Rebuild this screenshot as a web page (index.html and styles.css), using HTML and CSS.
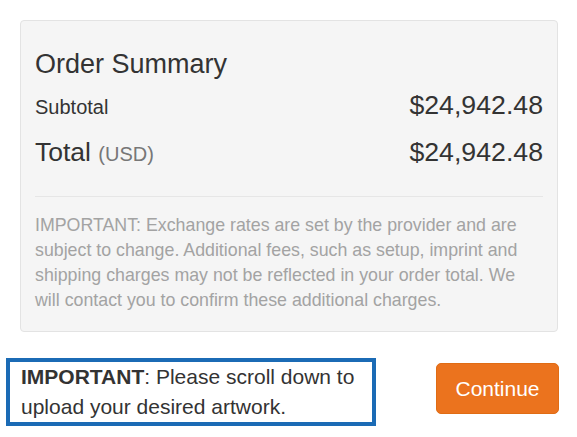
FILE: index.html
```html
<!DOCTYPE html>
<html>
<head>
<meta charset="utf-8">
<link rel="stylesheet" href="styles.css">
</head>
<body>
<div class="page">
  <section class="summary">
    <h3 class="summary-title">Order Summary</h3>
    <div class="row row-sub">
      <span class="label">Subtotal</span>
      <span class="amount">$24,942.48</span>
    </div>
    <div class="row row-total">
      <span class="label-total">Total <small class="currency">(USD)</small></span>
      <span class="amount">$24,942.48</span>
    </div>
    <hr class="divider">
    <p class="disclaimer">IMPORTANT: Exchange rates are set by the provider and are subject to change. Additional fees, such as setup, imprint and shipping charges may not be reflected in your order total. We will contact you to confirm these additional charges.</p>
  </section>
  <div class="actions">
    <div class="notice"><strong>IMPORTANT</strong>: Please scroll down to upload your desired artwork.</div>
    <button class="btn-continue" type="button">Continue</button>
  </div>
</div>
</body>
</html>
```
FILE: styles.css
```css
html, body {
  margin: 0;
  padding: 0;
  background: #ffffff;
}
body {
  font-family: "Liberation Sans", Arial, sans-serif;
  color: #333333;
}
.page {
  width: 577px;
}
.summary {
  box-sizing: border-box;
  width: 538px;
  margin: 20px 0 0 20px;
  padding: 28px 14px 18px;
  background: #f5f5f5;
  border: 1px solid #e3e3e3;
  border-radius: 4px;
}
.summary-title {
  margin: 0;
  font-size: 27px;
  font-weight: normal;
  line-height: 30px;
  color: #333333;
}
.row {
  display: flex;
  justify-content: space-between;
  align-items: baseline;
  line-height: 45px;
}
.row-sub {
  margin-top: 4px;
}
.label {
  font-size: 20px;
}
.label-total {
  font-size: 26.5px;
}
.currency {
  font-size: 20px;
  color: #777777;
}
.amount {
  font-size: 26.7px;
}
.divider {
  margin: 19px 0 0;
  border: 0;
  border-top: 1px solid #e6e6e6;
  height: 0;
}
.disclaimer {
  margin: 16px 0 0;
  font-size: 17.8px;
  line-height: 25px;
  color: #a3a3a3;
}
.actions {
  display: flex;
  justify-content: space-between;
  align-items: flex-start;
  margin-top: 26px;
  padding: 0 18px 0 6px;
}
.notice {
  box-sizing: border-box;
  width: 370px;
  padding: 0 8px 0 11px;
  border: 4px solid #1b6bb5;
  font-size: 21px;
  line-height: 30px;
  color: #333333;
}
.notice strong {
  font-weight: bold;
}
.btn-continue {
  margin-top: 5px;
  width: 123px;
  height: 51px;
  padding: 0;
  border: 1px solid #e06c14;
  border-radius: 5px;
  background: #eb731e;
  color: #ffffff;
  font-family: "Liberation Sans", Arial, sans-serif;
  font-size: 21px;
}
```
